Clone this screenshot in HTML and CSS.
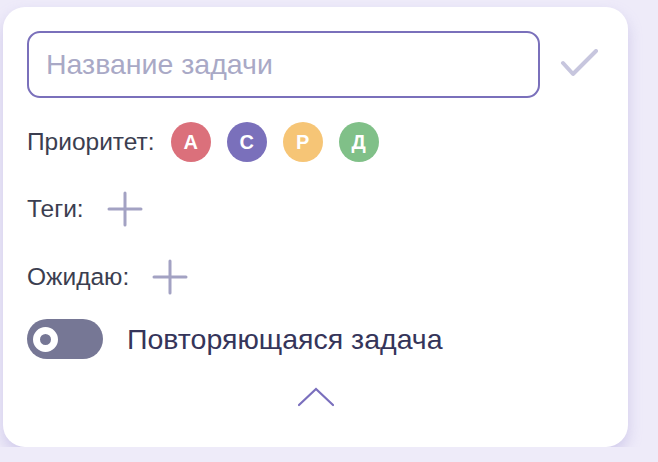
FILE: index.html
```html
<!DOCTYPE html>
<html lang="ru">
<head>
<meta charset="UTF-8">
<title>Новая задача</title>
<link rel="stylesheet" href="styles.css">
</head>
<body>

<div class="card">

  <div class="title-row">
    <input type="text" class="task-name" placeholder="Название задачи">
    <button class="save-button" title="Сохранить">
      <svg width="40" height="32" viewBox="0 0 40 32">
        <polyline points="3,14 13,25 36,2" fill="none" stroke="#c7c6de" stroke-width="4" stroke-linecap="round" stroke-linejoin="round"/>
      </svg>
    </button>
  </div>

  <div class="field priority">
    <span class="label">Приоритет:</span>
    <span class="prio prio-a">А</span>
    <span class="prio prio-c">С</span>
    <span class="prio prio-p">Р</span>
    <span class="prio prio-d">Д</span>
  </div>

  <div class="field tags">
    <span class="label">Теги:</span>
    <button class="add-button">
      <svg width="36" height="36" viewBox="0 0 36 36">
        <path d="M18 2 V34 M2 18 H34" stroke="#a3a2c3" stroke-width="3" stroke-linecap="round"/>
      </svg>
    </button>
  </div>

  <div class="field waiting">
    <span class="label">Ожидаю:</span>
    <button class="add-button">
      <svg width="36" height="36" viewBox="0 0 36 36">
        <path d="M18 2 V34 M2 18 H34" stroke="#a3a2c3" stroke-width="3" stroke-linecap="round"/>
      </svg>
    </button>
  </div>

  <div class="field repeat">
    <span class="toggle"><span class="knob"></span></span>
    <span class="repeat-label">Повторяющаяся задача</span>
  </div>

  <button class="collapse-button">
    <svg width="36" height="20" viewBox="0 0 36 20">
      <polyline points="1,18 18,2 35,18" fill="none" stroke="#7a6fbd" stroke-width="2.2" stroke-linecap="round" stroke-linejoin="miter"/>
    </svg>
  </button>

</div>

</body>
</html>
```

FILE: styles.css
```css
body {
  margin: 0;
  padding: 7px 0 0 3px;
  background: #eeebf9;
  font-family: "Liberation Sans", Arial, sans-serif;
  color: #3b3e50;
}

.card {
  width: 625px;
  height: 440px;
  box-sizing: border-box;
  padding: 24px 24px 0 24px;
  background: #fff;
  border-radius: 22px;
  box-shadow: 0 7px 14px rgba(165, 155, 215, 0.4);
}

.title-row {
  display: flex;
  align-items: center;
}

.task-name {
  width: 513px;
  height: 67px;
  box-sizing: border-box;
  padding: 0 17px;
  border: 2px solid #7a70bb;
  border-radius: 13px;
  font-family: inherit;
  font-size: 28.5px;
  color: #3b3e50;
  outline: none;
}

.task-name::placeholder {
  color: #a9a9c6;
}

.save-button {
  margin-left: 20px;
  padding: 0;
  border: none;
  background: none;
  display: flex;
}

.field {
  display: flex;
  align-items: center;
  height: 40px;
}

.label {
  font-size: 24.5px;
}

.priority {
  margin-top: 24px;
}

.prio {
  width: 40px;
  height: 40px;
  border-radius: 50%;
  display: flex;
  align-items: center;
  justify-content: center;
  margin-left: 16px;
  color: #fff;
  font-weight: bold;
  font-size: 20px;
}

.priority .prio:first-of-type {
  margin-left: 17px;
}

.prio-a { background: #db707b; }
.prio-c { background: #7a70bb; }
.prio-p { background: #f6c576; }
.prio-d { background: #80c088; }

.add-button {
  margin-left: 23px;
  padding: 0;
  border: none;
  background: none;
  display: flex;
}

.tags {
  margin-top: 27px;
}

.waiting {
  margin-top: 28px;
}

.repeat {
  margin-top: 22px;
}

.toggle {
  width: 76px;
  height: 40px;
  border-radius: 20px;
  background: #767795;
  display: flex;
  align-items: center;
  padding-left: 6px;
  box-sizing: border-box;
}

.knob {
  width: 25px;
  height: 25px;
  border-radius: 50%;
  background: #767795;
  border: 7.5px solid #fff;
  box-sizing: border-box;
}

.repeat-label {
  margin-left: 24px;
  font-size: 28.5px;
  color: #35355a;
}

.collapse-button {
  display: block;
  margin: 28px auto 0;
  padding: 0;
  border: none;
  background: none;
}
```
